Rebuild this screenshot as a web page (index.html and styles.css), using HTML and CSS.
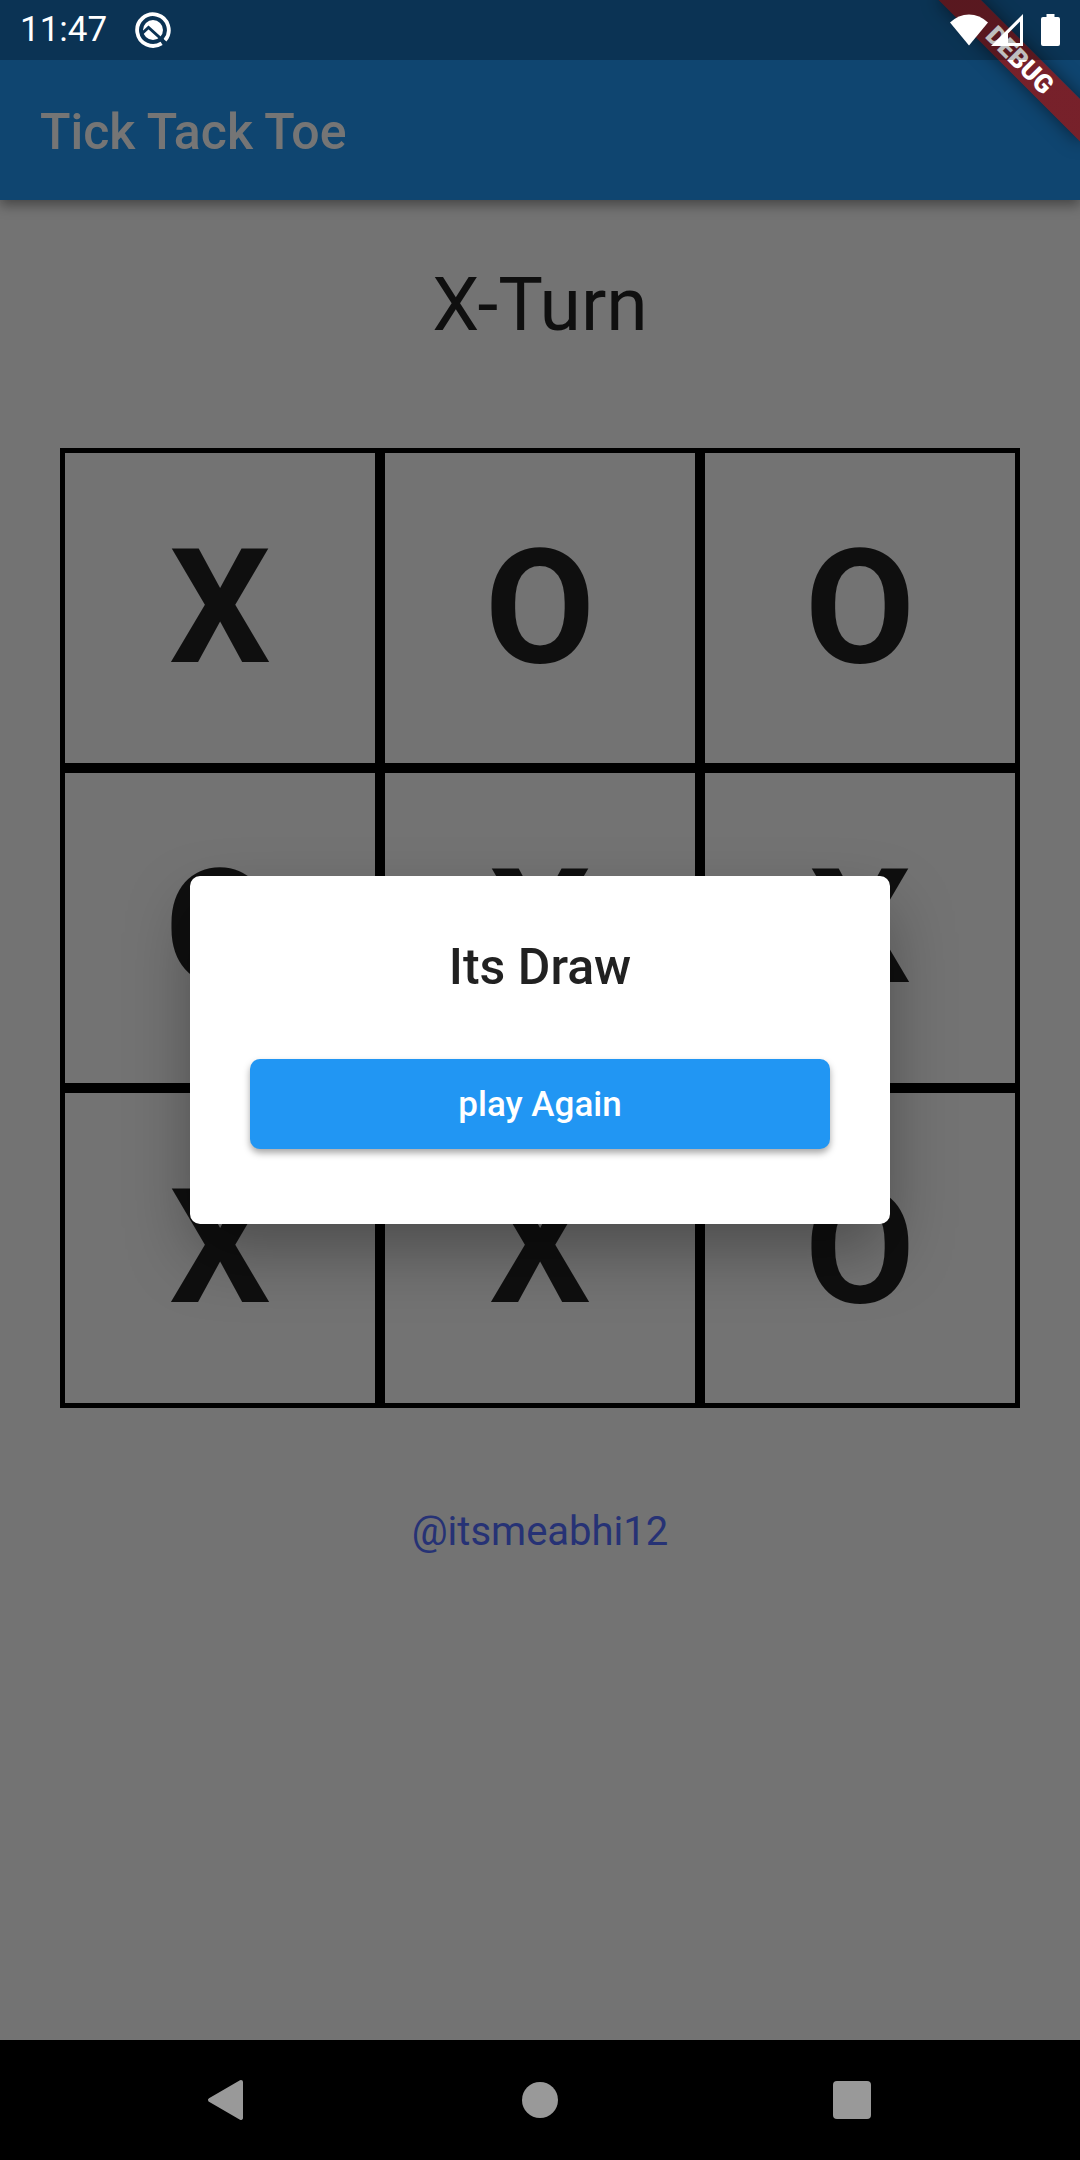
FILE: index.html
```html
<!DOCTYPE html>
<html lang="en">
<head>
<meta charset="utf-8">
<meta name="viewport" content="width=device-width, initial-scale=1">
<title>Tick Tack Toe</title>
<link rel="stylesheet" href="styles.css">
</head>
<body>
<div class="app">
  <header class="app-bar">
    <div class="status-bar">
      <time class="clock">11:47</time>
      <svg class="q-icon" width="36" height="36" viewBox="0 0 36 36" aria-hidden="true">
        <path d="M26.6 31.300A15.8 15.8 0 1 1 30 28.300" fill="none" stroke="#fff" stroke-width="3.800"/>
        <circle cx="18" cy="18" r="10" fill="#fff"/>
        <path d="M7 21.5L13.5 15.500L28 28.500" fill="none" stroke="#0b3354" stroke-width="3"/>
      </svg>
      <div class="status-icons">
        <svg width="38" height="32" viewBox="0 0 38 32" aria-hidden="true"><path d="M0 8.6Q8.500 .5 19 .5T38 8.600L19 31.500z" fill="#fff"/></svg>
        <svg class="signal" width="32" height="32" viewBox="0 0 32 32" aria-hidden="true"><path d="M32 0V32H0zM29 7.500L17 19.500V29H29z" fill="#fff" fill-rule="evenodd"/></svg>
        <svg class="battery" width="19" height="32" viewBox="0 0 19 32" aria-hidden="true"><path d="M5.500 0h8v3H17q2 0 2 2v25q0 2-2 2H2q-2 0-2-2V5q0-2 2-2h3.500z" fill="#fff"/></svg>
      </div>
    </div>
    <h1 class="app-title">Tick Tack Toe</h1>
  </header>

  <main class="game">
    <p class="turn">X-Turn</p>
    <div class="board">
      <button class="cell">X</button>
      <button class="cell">O</button>
      <button class="cell">O</button>
      <button class="cell">O</button>
      <button class="cell">X</button>
      <button class="cell">X</button>
      <button class="cell">X</button>
      <button class="cell">X</button>
      <button class="cell">O</button>
    </div>
    <a class="credit" href="#">@itsmeabhi12</a>
  </main>

  <div class="scrim">
    <section class="dialog" role="dialog" aria-modal="true" aria-labelledby="result">
      <h2 class="dialog-title" id="result">Its Draw</h2>
      <button class="play-again">play Again</button>
    </section>
  </div>

  <div class="banner-clip"><span class="banner">DEBUG</span></div>
</div>

<nav class="nav-bar">
  <button class="nav-button" aria-label="Back">
    <svg width="60" height="60" viewBox="0 0 60 60"><path d="M43 12L12 30L43 48z" fill="#999" stroke="#999" stroke-width="4" stroke-linejoin="round"/></svg>
  </button>
  <button class="nav-button" aria-label="Home">
    <svg width="60" height="60" viewBox="0 0 60 60"><circle cx="30" cy="30" r="18" fill="#999"/></svg>
  </button>
  <button class="nav-button" aria-label="Overview">
    <svg width="60" height="60" viewBox="0 0 60 60"><rect x="11" y="11" width="38" height="38" rx="4" fill="#999"/></svg>
  </button>
</nav>
</body>
</html>
```
FILE: styles.css
```css
* {
  box-sizing: border-box;
}

body {
  margin: 0;
  min-height: 100vh;
  display: flex;
  flex-direction: column;
  background: #000;
  font-family: Roboto, "Liberation Sans", sans-serif;
  color: rgba(0, 0, 0, 0.87);
}

button {
  margin: 0;
  padding: 0;
  border: 0;
  background: none;
  color: inherit;
  font: inherit;
}

svg {
  display: block;
}

.app {
  position: relative;
  flex: 1;
  display: flex;
  flex-direction: column;
  background: #fafafa;
}

/* App bar and status bar */

.app-bar {
  position: relative;
  background: #2196f3;
  box-shadow: 0 5px 12px rgba(0, 0, 0, 0.4);
}

.status-bar {
  position: relative;
  z-index: 3;
  height: 60px;
  padding: 0 20px;
  display: flex;
  align-items: center;
  background: rgba(0, 0, 0, 0.25);
  color: #fff;
}

.clock {
  font-size: 35px;
  line-height: 62px;
}

.q-icon {
  margin-left: 28px;
}

.status-icons {
  margin-left: auto;
  display: flex;
}

.signal {
  margin-left: 3px;
}

.battery {
  margin-left: 18px;
}

.app-title {
  margin: 0;
  padding: 4px 40px 0;
  font-size: 50px;
  font-weight: 500;
  line-height: 136px;
  color: #fff;
}

/* Game */

.game {
  flex: 1;
  padding: 60px;
  display: flex;
  flex-direction: column;
  align-items: center;
  gap: 100px;
}

.turn {
  margin: 0;
  font-size: 75px;
  line-height: 88px;
}

.board {
  width: 100%;
  display: grid;
  grid-template-columns: repeat(3, 1fr);
}

.cell {
  aspect-ratio: 1;
  border: 5px solid #000;
  font-size: 160px;
  font-weight: 700;
  line-height: 188px;
}

.credit {
  font-size: 40px;
  line-height: 47px;
  color: #536dfe;
  text-decoration: none;
}

/* Result dialog */

.scrim {
  position: absolute;
  inset: 0;
  z-index: 1;
  padding: 60px 40px 0;
  display: flex;
  align-items: center;
  justify-content: center;
  background: rgba(0, 0, 0, 0.54);
}

.dialog {
  width: 700px;
  max-width: 100%;
  padding: 62px 60px 75px;
  display: flex;
  flex-direction: column;
  gap: 62px;
  border-radius: 10px;
  background: #fff;
  box-shadow: 0 30px 66px -4px rgba(0, 0, 0, 0.34);
}

.dialog-title {
  margin: 0;
  font-size: 50px;
  font-weight: 500;
  line-height: 59px;
  text-align: center;
}

.play-again {
  height: 90px;
  border-radius: 10px;
  background: #2196f3;
  box-shadow: 0 4px 7px rgba(0, 0, 0, 0.35);
  color: #fff;
  font-size: 35px;
  font-weight: 500;
}

/* Corner ribbon */

.banner-clip {
  position: absolute;
  top: 0;
  right: 0;
  z-index: 2;
  width: 200px;
  height: 200px;
  overflow: hidden;
  pointer-events: none;
}

.banner {
  position: absolute;
  top: 70px;
  left: 100px;
  width: 200px;
  transform: rotate(45deg);
  transform-origin: 100px -70px;
  background:
    linear-gradient(rgba(183, 28, 28, 0.63), rgba(183, 28, 28, 0.63)),
    rgba(0, 0, 0, 0.4);
  box-shadow: 0 0 18px rgba(0, 0, 0, 0.5);
  color: #fff;
  font-size: 26px;
  font-weight: 900;
  line-height: 30px;
  text-align: center;
}

/* System navigation */

.nav-bar {
  height: 120px;
  padding: 0 72px;
  display: grid;
  grid-template-columns: repeat(3, 1fr);
}

.nav-button {
  display: flex;
  align-items: center;
  justify-content: center;
}
```
